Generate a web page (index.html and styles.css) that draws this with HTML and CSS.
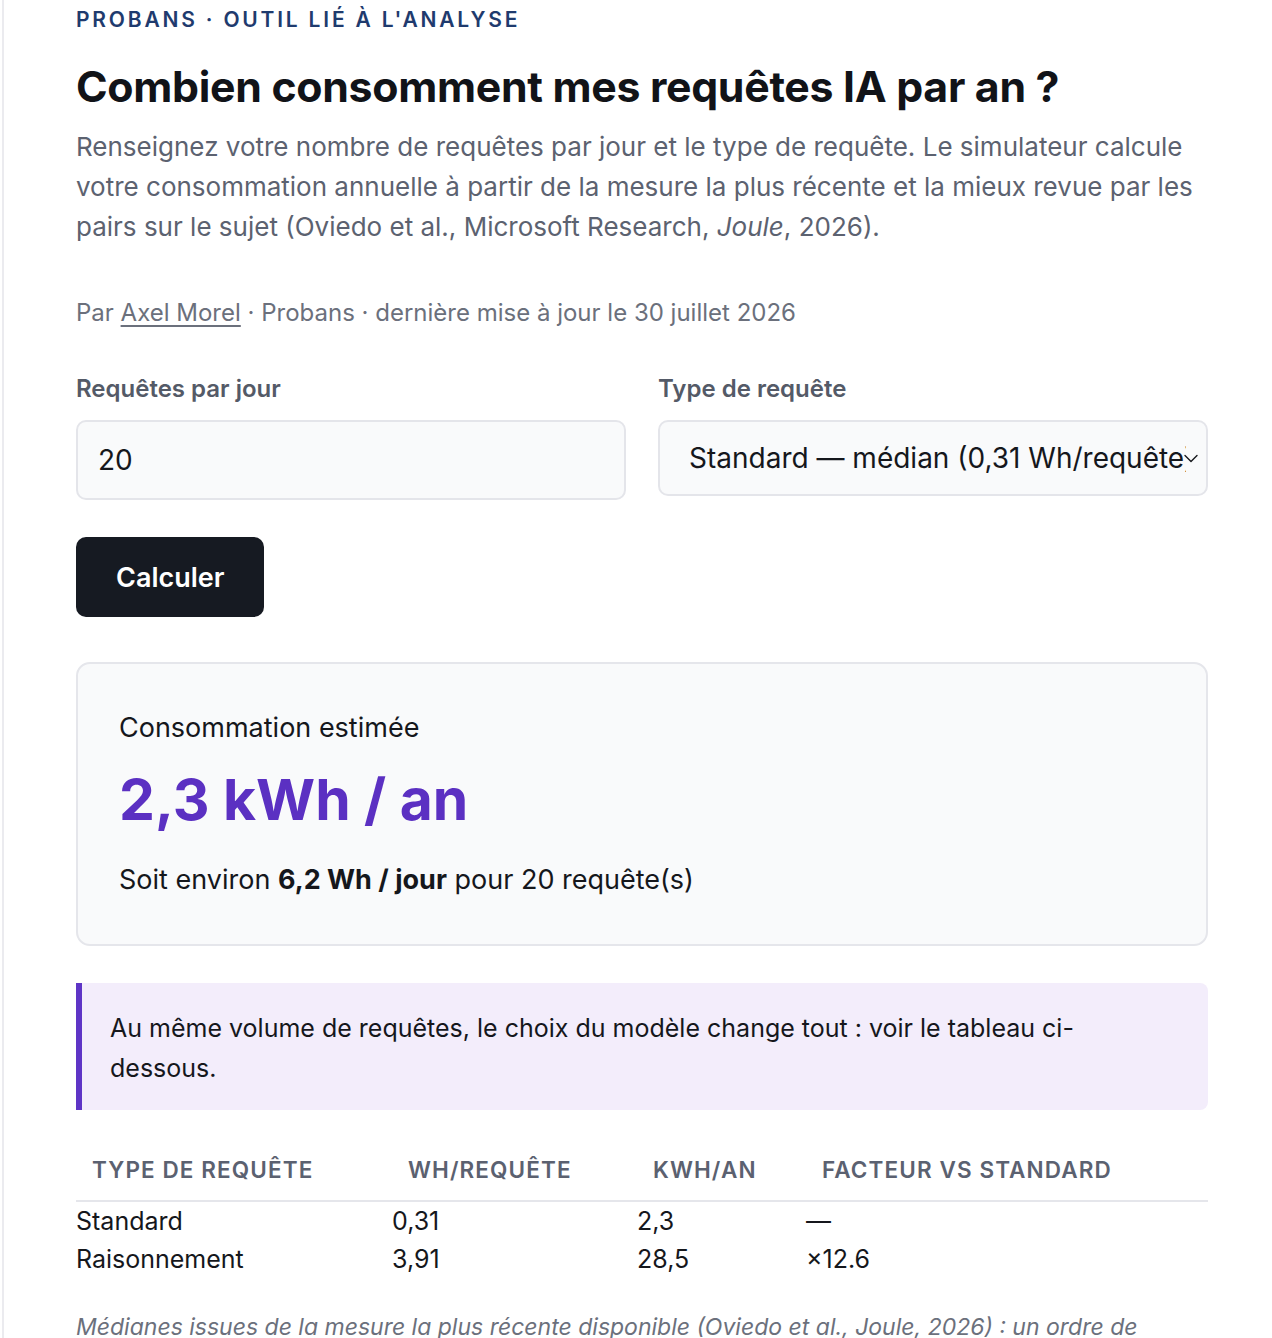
FILE: index.html
```html
<!DOCTYPE html>
<html lang="fr">
<head>
    <meta charset="UTF-8">
    <meta name="viewport" content="width=device-width, initial-scale=1.0">
    <title>Probans - Combien consomment mes requêtes IA par an ?</title>
    <link rel="stylesheet" href="styles.css">
</head>
<body>
    <div class="page">
        <p class="eyebrow">Probans · Outil lié à l'analyse</p>
        <h1>Combien consomment mes requêtes IA par an ?</h1>
        <p class="intro">Renseignez votre nombre de requêtes par jour et le type de requête. Le simulateur calcule votre consommation annuelle à partir de la mesure la plus récente et la mieux revue par les pairs sur le sujet (Oviedo et al., Microsoft Research, <em>Joule</em>, 2026).</p>
        <p class="byline">Par <a href="#">Axel Morel</a> · Probans · dernière mise à jour le 30 juillet 2026</p>

        <form class="sim-form" id="simForm">
            <div class="fields">
                <label class="field">
                    <span class="field-label">Requêtes par jour</span>
                    <input type="number" id="perDay" value="20" min="0" class="input">
                </label>
                <label class="field">
                    <span class="field-label">Type de requête</span>
                    <span class="select-wrap">
                        <select id="kind" class="select">
                            <option value="0.31">Standard — médian (0,31 Wh/requête)</option>
                            <option value="3.91">Raisonnement — médian (3,91 Wh/requête)</option>
                        </select>
                        <svg class="chevron" width="16" height="16" viewBox="0 0 16 16" aria-hidden="true">
                            <path d="M2 5.5l6 6 6-6" fill="none" stroke="#15171c" stroke-width="1.4" stroke-linecap="round" stroke-linejoin="round"/>
                        </svg>
                    </span>
                </label>
            </div>
            <button type="submit" class="btn">Calculer</button>
        </form>

        <div class="result">
            <p class="result-label">Consommation estimée</p>
            <p class="result-value" id="yearly">2,3 kWh / an</p>
            <p class="result-sub">Soit environ <strong id="daily">6,2 Wh / jour</strong> pour <span id="count">20</span> requête(s)</p>
        </div>

        <div class="callout">
            Au même volume de requêtes, le choix du modèle change tout : voir le tableau ci-dessous.
        </div>

        <table class="compare">
            <thead>
                <tr>
                    <th class="col-type">Type de requête</th>
                    <th class="col-wh">Wh/requête</th>
                    <th class="col-kwh">kWh/an</th>
                    <th>Facteur vs standard</th>
                </tr>
            </thead>
            <tbody>
                <tr>
                    <td>Standard</td>
                    <td>0,31</td>
                    <td id="kwhStd">2,3</td>
                    <td>—</td>
                </tr>
                <tr>
                    <td>Raisonnement</td>
                    <td>3,91</td>
                    <td id="kwhReason">28,5</td>
                    <td>×12.6</td>
                </tr>
            </tbody>
        </table>

        <p class="footnote">Médianes issues de la mesure la plus récente disponible (Oviedo et al., Joule, 2026) : un ordre de grandeur, pas une valeur exacte pour chaque requête.</p>
    </div>

    <script>
        const simForm = document.getElementById('simForm');
        const perDayInput = document.getElementById('perDay');
        const kindSelect = document.getElementById('kind');

        function fr(n) {
            return n.toFixed(1).replace('.', ',');
        }

        simForm.addEventListener('submit', function(event) {
            event.preventDefault();
            const perDay = Number(perDayInput.value) || 0;
            const wh = Number(kindSelect.value);
            const daily = perDay * wh;
            document.getElementById('yearly').textContent = fr(daily * 365 / 1000) + ' kWh / an';
            document.getElementById('daily').textContent = fr(daily) + ' Wh / jour';
            document.getElementById('count').textContent = perDay;
            document.getElementById('kwhStd').textContent = fr(perDay * 0.31 * 365 / 1000);
            document.getElementById('kwhReason').textContent = fr(perDay * 3.91 * 365 / 1000);
        });
    </script>
</body>
</html>
```

FILE: styles.css
```css
body {
    margin: 0;
    font-family: 'Inter', 'Noto Sans', sans-serif;
    color: #15171c;
    background-color: #fff;
}
.page {
    margin-left: 2px;
    border-left: 2px solid #ebebef;
    padding: 8px 64px 40px 72px;
    min-height: 1400px;
}
.page p {
    margin: 0;
}
.eyebrow {
    font-size: 21px;
    line-height: 24px;
    font-weight: 600;
    letter-spacing: 2.8px;
    text-transform: uppercase;
    color: #1f3b6e;
}
h1 {
    margin: 30px 0 0;
    font-size: 42.8px;
    line-height: 50px;
    font-weight: 700;
    letter-spacing: -0.3px;
    color: #111318;
}
.intro {
    margin-top: 15px !important;
    font-size: 26px;
    line-height: 40px;
    color: #5c6270;
}
.byline {
    margin-top: 50px !important;
    font-size: 24px;
    line-height: 32px;
    color: #6b707c;
}
.byline a {
    color: #6b707c;
    text-decoration: underline;
    text-underline-offset: 4px;
}
.sim-form {
    margin-top: 45px;
}
.fields {
    display: grid;
    grid-template-columns: 1fr 1fr;
    gap: 32px;
    align-items: start;
}
.field {
    display: flex;
    flex-direction: column;
}
.field-label {
    font-size: 24px;
    line-height: 30px;
    font-weight: 600;
    color: #545a67;
    margin-bottom: 16px;
}
.input,
.select {
    box-sizing: border-box;
    width: 100%;
    font-family: inherit;
    font-size: 28px;
    color: #15171c;
    background-color: #f9fafb;
    border: 2px solid #e4e5ea;
    border-radius: 10px;
}
.input {
    height: 80px;
    padding: 0 20px;
}
.input::-webkit-inner-spin-button,
.input::-webkit-outer-spin-button {
    -webkit-appearance: none;
    margin: 0;
}
.select-wrap {
    position: relative;
    display: block;
}
.select {
    height: 76px;
    padding: 0 20px 0 29px;
    -webkit-appearance: none;
    appearance: none;
}
.chevron {
    position: absolute;
    right: 9px;
    top: 30px;
    pointer-events: none;
}
.btn {
    margin-top: 37px;
    height: 80px;
    padding: 0 40px;
    font-family: inherit;
    font-size: 27px;
    font-weight: 600;
    color: #fff;
    background-color: #161a22;
    border: none;
    border-radius: 10px;
    cursor: pointer;
}
.result {
    margin-top: 45px;
    padding: 46px 41px 46px;
    background-color: #f9fafb;
    border: 2px solid #e5e6eb;
    border-radius: 14px;
}
.result-label {
    font-size: 27px;
    line-height: 36px;
}
.result-value {
    margin-top: 20px !important;
    font-size: 57px;
    line-height: 68px;
    font-weight: 700;
    color: #5b30c2;
}
.result-sub {
    margin-top: 28px !important;
    font-size: 27px;
    line-height: 36px;
}
.callout {
    margin-top: 37px;
    padding: 25px 80px 22px 28px;
    font-size: 25px;
    line-height: 40px;
    background-color: #f3edfb;
    border-left: 6px solid #5e35c6;
    border-radius: 0 8px 8px 0;
}
.compare {
    margin-top: 30px;
    width: 100%;
    table-layout: fixed;
    border-collapse: collapse;
    font-size: 25px;
}
.compare th {
    text-align: left;
    padding: 14px 16px;
    line-height: 32px;
    font-size: 22.5px;
    font-weight: 600;
    letter-spacing: 1.1px;
    text-transform: uppercase;
    color: #5b6170;
    border-bottom: 2px solid #e5e6eb;
    white-space: nowrap;
}
.compare td {
    padding: 0;
    line-height: 38px;
}
.col-type {
    width: 284px;
}
.col-wh {
    width: 213px;
}
.col-kwh {
    width: 137px;
}
.footnote {
    margin-top: 29px !important;
    font-size: 23px;
    line-height: 40px;
    font-style: italic;
    color: #6b707c;
}
```
